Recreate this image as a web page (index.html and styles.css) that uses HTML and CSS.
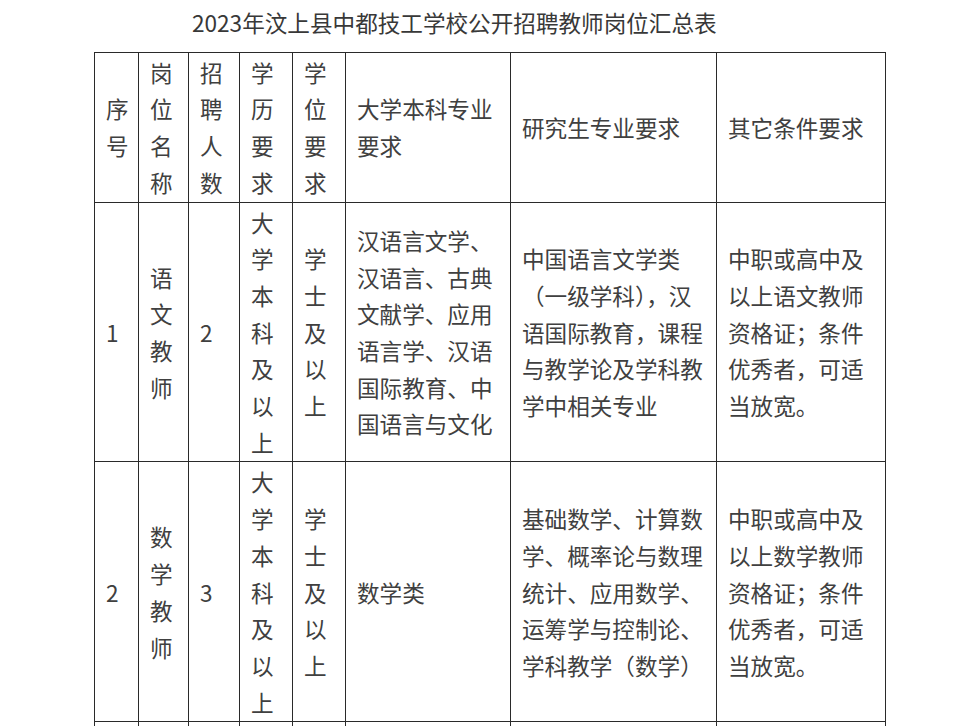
FILE: index.html
```html
<!DOCTYPE html>
<html lang="zh-CN">
<head>
<meta charset="utf-8">
<title>2023年汶上县中都技工学校公开招聘教师岗位汇总表</title>
<link rel="stylesheet" href="styles.css">
</head>
<body>
<div class="page">
  <h1 class="title">2023年汶上县中都技工学校公开招聘教师岗位汇总表</h1>
  <table class="jobs">
    <colgroup>
      <col class="c1"><col class="c2"><col class="c3"><col class="c4"><col class="c5"><col class="c6"><col class="c7"><col class="c8">
    </colgroup>
    <tbody>
      <tr class="head">
        <td>序号</td>
        <td>岗位名称</td>
        <td>招聘人数</td>
        <td>学历要求</td>
        <td>学位要求</td>
        <td>大学本科专业要求</td>
        <td>研究生专业要求</td>
        <td>其它条件要求</td>
      </tr>
      <tr class="row">
        <td>1</td>
        <td>语文教师</td>
        <td>2</td>
        <td>大学本科及以上</td>
        <td>学士及以上</td>
        <td>汉语言文学、汉语言、古典文献学、应用语言学、汉语国际教育、中国语言与文化</td>
        <td>中国语言文学类<br>（一级学科），汉语国际教育，课程与教学论及学科教学中相关专业</td>
        <td>中职或高中及以上语文教师资格证；条件优秀者，可适当放宽。</td>
      </tr>
      <tr class="row">
        <td>2</td>
        <td>数学教师</td>
        <td>3</td>
        <td>大学本科及以上</td>
        <td>学士及以上</td>
        <td>数学类</td>
        <td>基础数学、计算数学、概率论与数理统计、应用数学、运筹学与控制论、学科教学（数学）</td>
        <td>中职或高中及以上数学教师资格证；条件优秀者，可适当放宽。</td>
      </tr>
      <tr class="row">
        <td></td><td></td><td></td><td></td><td></td><td></td><td></td><td></td>
      </tr>
    </tbody>
  </table>
</div>
</body>
</html>
```

FILE: styles.css
```css
html, body {
  margin: 0;
  padding: 0;
  background: #ffffff;
}

body {
  font-family: "Noto Sans CJK SC", "Noto Sans", sans-serif;
  color: #404040;
  font-size: 22.6px;
  line-height: 36.7px;
}

.page {
  padding: 5px 0 0 94px;
}

.title {
  margin: 0 0 10px 0;
  padding-left: 98px;
  font-size: 22.6px;
  line-height: 36.7px;
  font-weight: normal;
  color: #383838;
}

.jobs {
  border-collapse: collapse;
  table-layout: fixed;
  width: 791px;
}

.c1 { width: 44px; }
.c2 { width: 50px; }
.c3 { width: 51px; }
.c4 { width: 53px; }
.c5 { width: 53px; }
.c6 { width: 165px; }
.c7 { width: 206px; }
.c8 { width: 169px; }

.jobs td {
  border: 1px solid #2a2a2a;
  padding: 2px 10px 0 11px;
  vertical-align: middle;
  text-align: left;
  word-break: break-all;
}

.row:last-child td {
  height: 257px;
}
```
